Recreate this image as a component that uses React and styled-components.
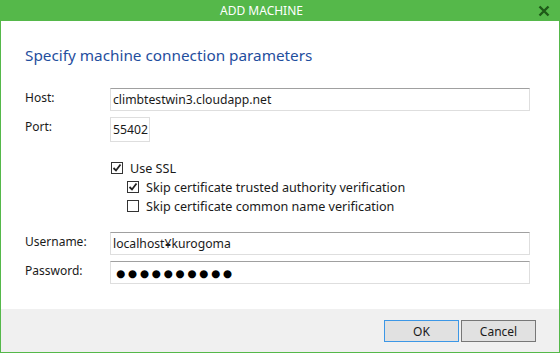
import React from "react";
import styled, { createGlobalStyle } from "styled-components";

const Global = createGlobalStyle`
  html, body { margin: 0; padding: 0; background: #ffffff; }
  body { font-family: "Noto Sans", "Liberation Sans", sans-serif; }
  * { box-sizing: border-box; }
`;

const FONT = `"Noto Sans", "Liberation Sans", sans-serif`;

const Dialog = styled.div`
  width: 560px;
  height: 353px;
  border: 1px solid #55b84a;
  border-top: none;
  display: flex;
  flex-direction: column;
  background: #ffffff;
  font-family: ${FONT};
  color: #1a1a1a;
`;

const TitleBar = styled.div`
  height: 21px;
  background: #55b84a;
  display: flex;
  align-items: center;
  padding: 0 10px 0 0;
  margin: 0 -1px;
`;

const Title = styled.div`
  flex: 1;
  text-align: center;
  padding-right: 15px;
  color: #ffffff;
  font-size: 12px;
  line-height: 16px;
`;

const CloseButton = styled.div`
  width: 12px;
  height: 12px;
  display: flex;
`;

const Body = styled.div`
  flex: 1;
  padding: 23px 29px 0 24px;
  display: flex;
  flex-direction: column;
`;

const Heading = styled.h1`
  margin: 0;
  font-size: 15.3px;
  font-weight: 400;
  color: #1f4e9e;
  line-height: 22px;
`;

const Form = styled.div`
  margin-top: 22px;
  display: grid;
  grid-template-columns: 85px 1fr;
  row-gap: 6px;
`;

const Label = styled.div`
  font-size: 12px;
  line-height: 16px;
  padding-top: ${(p) => p.$top || 0}px;
  color: #1a1a1a;
`;

const Field = styled.div`
  height: ${(p) => p.$h || 23}px;
  width: ${(p) => (p.$w ? `${p.$w}px` : "100%")};
  border: 1px solid #dedede;
  border-top-color: ${(p) => (p.$plain ? "#dedede" : "#a0a0a0")};
  background: #ffffff;
  padding: 0 2px;
  display: flex;
  align-items: center;
  font-size: 12.2px;
  color: #1a1a1a;
  white-space: nowrap;
  overflow: hidden;
`;

const Dots = styled.span`
  font-family: "DejaVu Sans", sans-serif;
  font-size: 10.5px;
  letter-spacing: 2.7px;
  padding-left: 3px;
  color: #000000;
`;

const Options = styled.div`
  grid-column: 2;
  display: flex;
  flex-direction: column;
  gap: 7px;
  padding: 14px 0 14px 1px;
`;

const CheckRow = styled.label`
  display: flex;
  align-items: center;
  gap: 7px;
  padding-left: ${(p) => (p.$indent ? 16 : 0)}px;
  height: 12px;
  font-size: 12.6px;
  color: #1a1a1a;
`;

const Box = styled.span`
  width: 12px;
  height: 12px;
  border: 1px solid #333333;
  background: #ffffff;
  display: flex;
  align-items: center;
  justify-content: center;
  flex: none;
`;

const Footer = styled.div`
  height: 43px;
  background: #f0f0f0;
  display: flex;
  justify-content: flex-end;
  align-items: flex-start;
  gap: 2px;
  padding: 11px 23px 0 0;
`;

const Button = styled.button`
  width: 75px;
  height: 22px;
  background: #e1e1e1;
  border: 1px solid ${(p) => (p.$primary ? "#3c97e6" : "#777777")};
  font-family: ${FONT};
  font-size: 12px;
  color: #1a1a1a;
  padding: 0;
`;

function Check({ checked }) {
  return (
    <Box>
      {checked && (
        <svg width="10" height="10" viewBox="0 0 10 10">
          <path d="M1.5 5 L4 7.5 L8.5 1.5" fill="none" stroke="#222" strokeWidth="1.8" />
        </svg>
      )}
    </Box>
  );
}

export default function App() {
  return (
    <>
      <Global />
      <Dialog>
        <TitleBar>
          <Title>ADD MACHINE</Title>
          <CloseButton>
            <svg width="12" height="12" viewBox="0 0 12 12">
              <path d="M1.5 1.5 L10.5 10.5 M10.5 1.5 L1.5 10.5" stroke="#1f5a18" strokeWidth="2.4" />
            </svg>
          </CloseButton>
        </TitleBar>
        <Body>
          <Heading>Specify machine connection parameters</Heading>
          <Form>
            <Label $top={2}>Host:</Label>
            <Field>climbtestwin3.cloudapp.net</Field>
            <Label $top={2}>Port:</Label>
            <Field $w={40} $h={25} $plain>55402</Field>
            <Options>
              <CheckRow>
                <Check checked />
                Use SSL
              </CheckRow>
              <CheckRow $indent>
                <Check checked />
                Skip certificate trusted authority verification
              </CheckRow>
              <CheckRow $indent>
                <Check />
                Skip certificate common name verification
              </CheckRow>
            </Options>
            <Label $top={2}>Username:</Label>
            <Field>localhost¥kurogoma</Field>
            <Label $top={2}>Password:</Label>
            <Field>
              <Dots>●●●●●●●●●●</Dots>
            </Field>
          </Form>
        </Body>
        <Footer>
          <Button $primary>OK</Button>
          <Button>Cancel</Button>
        </Footer>
      </Dialog>
    </>
  );
}
